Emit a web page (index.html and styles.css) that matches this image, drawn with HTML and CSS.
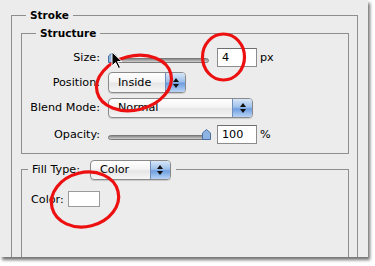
FILE: index.html
```html
<!doctype html>
<html>

<head>
	<meta charset="utf-8">
	<link rel="stylesheet" href="styles.css">
	<title>Stroke</title>
</head>

<body>
	<div class="page">
		<div class="panel">
			<fieldset class="group outer">
				<legend class="title">Stroke</legend>

				<fieldset class="group structure">
					<legend class="title">Structure</legend>

					<div class="row">
						<span class="label">Size:</span>
						<div class="slider">
							<div class="track"></div>
							<svg class="thumb thumbLeft" width="9" height="11" viewBox="0 0 9 11">
								<path d="M4.5 0.5 L8.5 4 L8.5 10.5 L0.5 10.5 L0.5 4 Z" fill="#8fb4e3" stroke="#4a6f9e" />
							</svg>
						</div>
						<div class="field">4</div>
						<span class="unit">px</span>
					</div>

					<div class="row">
						<span class="label">Position:</span>
						<div class="popup popupShort">
							<span class="popupText">Inside</span>
							<span class="arrows"><i class="up"></i><i class="down"></i></span>
						</div>
					</div>

					<div class="row">
						<span class="label">Blend Mode:</span>
						<div class="popup popupLong">
							<span class="popupText">Normal</span>
							<span class="arrows"><i class="up"></i><i class="down"></i></span>
						</div>
					</div>

					<div class="row rowLast">
						<span class="label">Opacity:</span>
						<div class="slider">
							<div class="track"></div>
							<svg class="thumb thumbRight" width="9" height="11" viewBox="0 0 9 11">
								<path d="M4.5 0.5 L8.5 4 L8.5 10.5 L0.5 10.5 L0.5 4 Z" fill="#8fb4e3" stroke="#4a6f9e" />
							</svg>
						</div>
						<div class="field">100</div>
						<span class="unit">%</span>
					</div>
				</fieldset>

				<fieldset class="group fill">
					<legend class="fillLegend">
						<span class="fillHead">
							<span>Fill Type:</span>
							<span class="popup popupFill">
								<span class="popupText">Color</span>
								<span class="arrows"><i class="up"></i><i class="down"></i></span>
							</span>
						</span>
					</legend>

					<div class="colorRow">
						<span>Color:</span>
						<div class="swatch"></div>
					</div>
				</fieldset>
			</fieldset>
		</div>

		<!-- annotations drawn over the dialog -->
		<svg class="marks" width="375" height="266" viewBox="0 0 375 266">
			<g fill="none" stroke="#ec1010" stroke-width="3.2">
				<ellipse cx="223.5" cy="57" rx="21" ry="23" />
				<ellipse cx="134" cy="83" rx="38" ry="27" transform="rotate(-14 134 83)" />
				<ellipse cx="85" cy="199.5" rx="34" ry="27" transform="rotate(-14 85 199.5)" />
			</g>
			<path d="M112 52 L112 66 L115.5 62.5 L118.5 68.5 L120.5 67.5 L117.5 61.5 L122 61.5 Z" fill="#000" stroke="#fff" stroke-width="1" />
		</svg>
	</div>
</body>

</html>
```

FILE: styles.css
```css
body {
	margin: 0;
	background: #fff;
	font-family: "DejaVu Sans", Verdana, sans-serif;
	font-size: 11.2px;
	color: #000;
}

.page {
	position: relative;
	width: 375px;
	height: 266px;
}

.panel {
	width: 368px;
	height: 257px;
	background: #ececec;
	overflow: hidden;
	box-shadow: 2px 3px 3px rgba(0, 0, 0, 0.55);
	padding-top: 8px;
	box-sizing: border-box;
}

.group {
	border: 1px solid #8e8e8e;
	margin: 0;
	padding: 0;
	min-width: 0;
}

.title {
	font-weight: bold;
	font-size: 10.5px;
	line-height: 14px;
	padding: 0 4px;
	margin-left: 14px;
}

.outer {
	margin-left: 11px;
	width: 347px;
	box-sizing: border-box;
	height: 300px;
}

.structure {
	margin: 4px 8px 0 9px;
	padding: 5px 0 6px 0;
}

.row {
	display: flex;
	align-items: center;
	height: 25px;
}

.rowLast {
	margin-top: 2px;
}

.label {
	width: 78px;
	text-align: right;
	margin-right: 8px;
}

.slider {
	position: relative;
	width: 101px;
	height: 12px;
	margin-right: 8px;
}

.track {
	position: absolute;
	left: 0;
	right: 0;
	top: 6px;
	height: 3px;
	border: 1px solid #7a7a7a;
	border-radius: 3px;
	background: linear-gradient(#8a8a8a, #cfcfcf);
}

.thumb {
	position: absolute;
	top: 0;
}

.thumbLeft {
	left: 0;
}

.thumbRight {
	right: -2px;
}

.field {
	width: 40px;
	height: 19px;
	box-sizing: border-box;
	border: 1px solid #8c8c8c;
	border-top-color: #6e6e6e;
	background: #fff;
	padding-left: 4px;
	line-height: 17px;
}

.unit {
	margin-left: 3px;
}

.popup {
	display: flex;
	align-items: center;
	height: 20px;
	box-sizing: border-box;
	border: 1px solid #8a8a8a;
	border-radius: 4px;
	background: linear-gradient(#ffffff, #f4f4f4 45%, #e6e6e6 55%, #f6f6f6);
	box-shadow: 0 1px 1px rgba(0, 0, 0, 0.15);
	overflow: hidden;
}

.popupText {
	flex: 1;
	padding-left: 9px;
}

.arrows {
	width: 19px;
	height: 100%;
	border-left: 1px solid #6f8fb8;
	background: linear-gradient(#d7e6f8, #9fc0ea 45%, #6f9ee0 55%, #b8d4f6);
	display: flex;
	flex-direction: column;
	align-items: center;
	justify-content: center;
	gap: 2px;
}

.arrows i {
	width: 0;
	height: 0;
	border-left: 3px solid transparent;
	border-right: 3px solid transparent;
}

.arrows .up {
	border-bottom: 4px solid #111;
}

.arrows .down {
	border-top: 4px solid #111;
}

.popupShort {
	width: 78px;
	height: 21px;
}

.popupLong {
	width: 145px;
}

.popupFill {
	width: 81px;
	margin-left: 10px;
}

.fill {
	margin: 5px 8px 0 9px;
	height: 200px;
}

.fillLegend {
	margin-left: 6px;
	padding: 0 5px 0 4px;
}

.fillHead {
	display: flex;
	align-items: center;
	height: 21px;
}

.colorRow {
	display: flex;
	align-items: center;
	padding: 11px 0 0 9px;
	gap: 4px;
}

.swatch {
	width: 32px;
	height: 16px;
	box-sizing: border-box;
	border: 1px solid #9a9a9a;
	background: #fff;
}

.marks {
	position: absolute;
	left: 0;
	top: 0;
	pointer-events: none;
}
```
